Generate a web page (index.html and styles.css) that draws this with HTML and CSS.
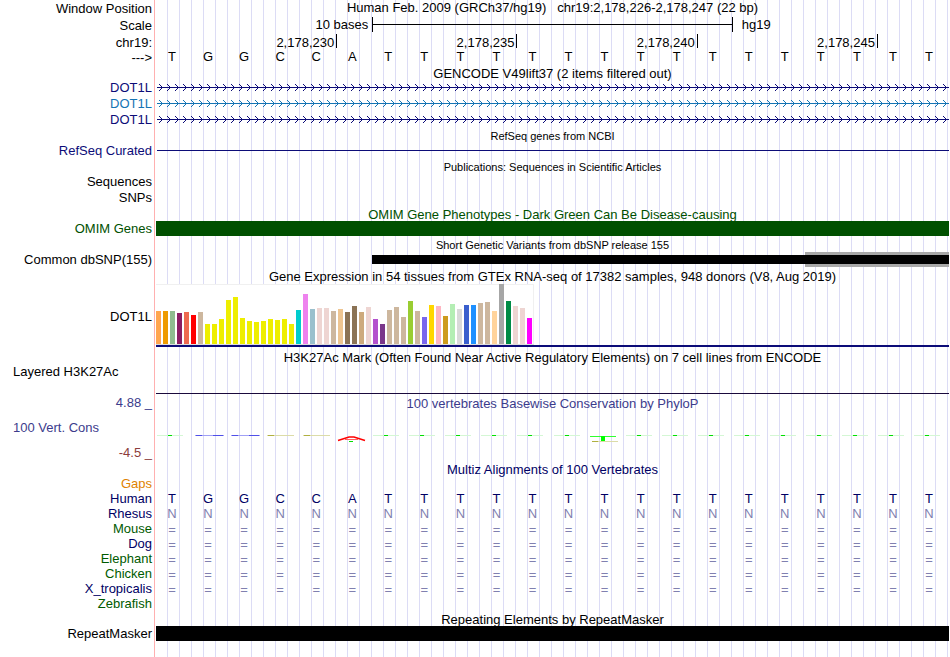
FILE: index.html
```
<!DOCTYPE html>
<html lang="en">
<head>
    <meta charset="UTF-8">
    <meta name="viewport" content="width=device-width, initial-scale=1.0">
    <title>chr19:2,178,226-2,178,247 hg19</title>
    <link rel="stylesheet" href="styles.css">
</head>
<body>
    <svg class="defs" aria-hidden="true">
        <defs>
            <pattern id="arrowsNavy" width="8" height="16" patternUnits="userSpaceOnUse">
                <path d="M2 4h1v1h-1zM3 5h1v1h-1zM4 6h1v1h-1zM5 7h1v1h-1zM4 8h1v1h-1zM3 9h1v1h-1zM2 10h1v1h-1z" fill="#0c0c78"/>
            </pattern>
            <pattern id="arrowsBlue" width="8" height="16" patternUnits="userSpaceOnUse">
                <path d="M2 4h1v1h-1zM3 5h1v1h-1zM4 6h1v1h-1zM5 7h1v1h-1zM4 8h1v1h-1zM3 9h1v1h-1zM2 10h1v1h-1z" fill="#1474b4"/>
            </pattern>
        </defs>
    </svg>

    <main class="tracks">
        <div class="row header">
            <div class="label">Window Position</div>
            <div class="title">Human Feb. 2009 (GRCh37/hg19) &nbsp; chr19:2,178,226-2,178,247 (22 bp)</div>
        </div>
        <div class="row header">
            <div class="label">Scale</div>
            <div class="data columns">
                <div class="scale-from">10 bases</div>
                <div class="scale-bar"></div>
                <div class="scale-to">hg19</div>
            </div>
        </div>
        <div class="row position">
            <div class="label">chr19:</div>
            <div class="data columns">
                <div class="tick">2,178,230</div>
                <div class="tick">2,178,235</div>
                <div class="tick">2,178,240</div>
                <div class="tick">2,178,245</div>
            </div>
        </div>
        <div class="row strand">
            <div class="label">---&gt;</div>
            <div class="data bases" data-seq="TGGCCATTTTTTTTTTTTTTTT"></div>
        </div>

        <h2 class="title">GENCODE V49lift37 (2 items filtered out)</h2>
        <div class="row navy">
            <div class="label">DOT1L</div>
            <div class="data intron"><svg><rect width="100%" height="16" fill="url(#arrowsNavy)"/></svg></div>
        </div>
        <div class="row blue">
            <div class="label">DOT1L</div>
            <div class="data intron"><svg><rect width="100%" height="16" fill="url(#arrowsBlue)"/></svg></div>
        </div>
        <div class="row navy">
            <div class="label">DOT1L</div>
            <div class="data intron"><svg><rect width="100%" height="16" fill="url(#arrowsNavy)"/></svg></div>
        </div>

        <h2 class="title small">RefSeq genes from NCBI</h2>
        <div class="row navy">
            <div class="label">RefSeq Curated</div>
            <div class="data intron"></div>
        </div>

        <h2 class="title small">Publications: Sequences in Scientific Articles</h2>
        <div class="row">
            <div class="label">Sequences</div>
        </div>
        <div class="row">
            <div class="label">SNPs</div>
        </div>

        <h2 class="title omim">OMIM Gene Phenotypes - Dark Green Can Be Disease-causing</h2>
        <div class="row omim">
            <div class="label">OMIM Genes</div>
            <div class="data"><div class="bar"></div></div>
        </div>

        <h2 class="title small">Short Genetic Variants from dbSNP release 155</h2>
        <div class="row">
            <div class="label">Common dbSNP(155)</div>
            <div class="data columns variants">
                <div class="variant"></div>
                <div class="variant uncertain"></div>
            </div>
        </div>

        <h2 class="title">Gene Expression in 54 tissues from GTEx RNA-seq of 17382 samples, 948 donors (V8, Aug 2019)</h2>
        <div class="row gtex">
            <div class="label">DOT1L</div>
            <div class="data">
                <div class="chart" id="gtexChart"></div>
                <div class="gene-line"></div>
            </div>
        </div>

        <h2 class="title">H3K27Ac Mark (Often Found Near Active Regulatory Elements) on 7 cell lines from ENCODE</h2>
        <div class="row h3k27">
            <div class="label left">Layered H3K27Ac</div>
            <div class="data"></div>
        </div>

        <div class="row phylop-top">
            <div class="label">4.88 _</div>
            <h2 class="title">100 vertebrates Basewise Conservation by PhyloP</h2>
        </div>
        <div class="row phylop">
            <div class="label-group">
                <div class="label left">100 Vert. Cons</div>
                <div class="label min">-4.5 _</div>
            </div>
            <div class="data bases" id="phylop"></div>
        </div>

        <h2 class="title multiz">Multiz Alignments of 100 Vertebrates</h2>
        <div class="row species gaps">
            <div class="label">Gaps</div>
        </div>
        <div class="row species human">
            <div class="label">Human</div>
            <div class="data bases" data-seq="TGGCCATTTTTTTTTTTTTTTT"></div>
        </div>
        <div class="row species">
            <div class="label">Rhesus</div>
            <div class="data bases" data-seq="NNNNNNNNNNNNNNNNNNNNNN"></div>
        </div>
        <div class="row species green">
            <div class="label">Mouse</div>
            <div class="data bases unaligned" data-seq="======================"></div>
        </div>
        <div class="row species">
            <div class="label">Dog</div>
            <div class="data bases unaligned" data-seq="======================"></div>
        </div>
        <div class="row species green">
            <div class="label">Elephant</div>
            <div class="data bases unaligned" data-seq="======================"></div>
        </div>
        <div class="row species green">
            <div class="label">Chicken</div>
            <div class="data bases unaligned" data-seq="======================"></div>
        </div>
        <div class="row species">
            <div class="label">X_tropicalis</div>
            <div class="data bases unaligned" data-seq="======================"></div>
        </div>
        <div class="row species green">
            <div class="label">Zebrafish</div>
        </div>

        <h2 class="title">Repeating Elements by RepeatMasker</h2>
        <div class="row">
            <div class="label">RepeatMasker</div>
            <div class="data"><div class="bar"></div></div>
        </div>
    </main>

    <script>
        // one cell per base
        document.querySelectorAll('[data-seq]').forEach(row => {
            row.innerHTML = row.dataset.seq.split('').map(b => `<span>${b}</span>`).join('');
        });

        // GTEx: [height, colour] per tissue
        const tissues = [
            [33, '#ffa54f'], [33, '#ee9a00'], [33, '#8fbc8f'], [31, '#8b1c62'], [32, '#ee6a50'],
            [29, '#ff0000'], [32, '#cdb79e'], [20, '#eeee00'], [20, '#eeee00'], [25, '#eeee00'],
            [44, '#eeee00'], [47, '#eeee00'], [26, '#eeee00'], [23, '#eeee00'], [22, '#eeee00'],
            [23, '#eeee00'], [25, '#eeee00'], [24, '#eeee00'], [25, '#eeee00'], [20, '#eeee00'],
            [34, '#00cdcd'], [50, '#ee82ee'], [35, '#9ac0cd'], [36, '#eed5d2'], [36, '#eed5d2'],
            [33, '#cdb79e'], [35, '#eec591'], [32, '#8b7355'], [38, '#8b7355'], [32, '#cdaa7d'],
            [37, '#eed5d2'], [25, '#b452cd'], [20, '#7a378b'], [34, '#cdb79e'], [37, '#cdb79e'],
            [27, '#cdb79e'], [43, '#9acd32'], [33, '#cdb79e'], [27, '#7a67ee'], [39, '#ffd700'],
            [38, '#ffb6c1'], [28, '#cd9b1d'], [40, '#b4eeb4'], [35, '#d9d9d9'], [39, '#3a5fcd'],
            [39, '#1e90ff'], [41, '#cdb79e'], [42, '#cdb79e'], [33, '#ffd39b'], [60, '#a6a6a6'],
            [43, '#008b45'], [38, '#eed5d2'], [36, '#eed5d2'], [26, '#ff00ff']
        ];
        document.getElementById('gtexChart').innerHTML = tissues
            .map(([h, c]) => `<i style="height:${h}px;background:${c}"></i>`).join('');

        // PhyloP logo letters, flattened to almost nothing where the score is near zero
        const glyphs = {
            T: '<path d="M3 .5h26" stroke="#d4f7d4"/><path d="M14 .5h4" stroke="#00e000"/>',
            G: '<path d="M5 .5h29" stroke="#a0a0f5"/><path d="M6 .5h6M23 .5h10" stroke="#5050e8"/>',
            C: '<path d="M5 .5h27" stroke="#dcdca8"/><path d="M6 .5h6" stroke="#b0b040"/>',
            A: '<path d="M4 5.5L15 2h5l11 3.5" fill="none" stroke="#ff0000" stroke-width="1.5"/><path d="M11 4.5h13" stroke="#ff6060"/><path d="M15 6.5h4" stroke="#00e000"/>',
            t: '<path d="M3 1.5h26" stroke="#30ff30"/><path d="M14 1h4v5h-4z" fill="#00ff00"/><path d="M5 6.5h26" stroke="#dcdca8"/><path d="M5 6.5h6" stroke="#b0b040"/>'
        };
        document.getElementById('phylop').innerHTML = 'TGGCCATTTTTTtTTTTTTTTT'.split('')
            .map(b => `<svg viewBox="0 0 36 8">${glyphs[b]}</svg>`).join('');
    </script>
</body>
</html>
```
FILE: styles.css
```
:root {
    --navy: #0c0c78;
    --blue: #1474b4;
    --green: #005000;
    --grid: #dcdcf5;
    --edge: #ffb0b0;
}

body {
    font-family: "Liberation Sans", Arial, Helvetica, sans-serif;
    font-size: 13px;
    line-height: 16px;
    margin: 0;
    background-color: white;
    color: black;
}

.defs {
    position: absolute;
    width: 0;
    height: 0;
}

/* pink edge of the label column, then a guide line every 12px */
.tracks {
    min-height: 100vh;
    margin-right: 1px;
    background-image:
        linear-gradient(var(--edge), var(--edge)),
        repeating-linear-gradient(to right, transparent 0 11px, var(--grid) 11px 12px);
    background-size: 1px 100%, 100% 100%;
    background-position: 154px 0, 156px 0;
    background-repeat: no-repeat;
}

.row {
    display: grid;
    grid-template-columns: 152px minmax(0, 1fr);
    column-gap: 4px;
    height: 16px;
}

.label {
    text-align: right;
    white-space: nowrap;
}

.label.left {
    text-align: left;
    padding-left: 13px;
}

.title {
    margin: 0 0 0 156px;
    height: 15px;
    font-size: 13px;
    font-weight: normal;
    line-height: 17px;
    text-align: center;
    white-space: nowrap;
}

.title.small {
    font-size: 11px;
    line-height: 16px;
}

.row .title {
    margin-left: 0;
}

/* ruler */
.header {
    height: 17px;
    line-height: 17px;
}

.header .title {
    line-height: 15px;
}

.columns {
    display: grid;
    grid-template-columns: repeat(22, 1fr);
}

.scale-from {
    grid-column: span 6;
    padding-right: 4px;
    line-height: 15px;
    text-align: right;
}

.scale-bar {
    grid-column: span 10;
    height: 15px;
    border: solid black;
    border-width: 0 1px;
    background: linear-gradient(black, black) 0 7px / 100% 1px no-repeat;
}

.scale-to {
    grid-column: span 6;
    padding-left: 9px;
    line-height: 15px;
}

.position {
    height: 15px;
    line-height: 17px;
}

.tick {
    grid-column: span 5;
    height: 14px;
    padding-right: 2px;
    border-right: 1px solid black;
    margin-right: -1px;
    text-align: right;
}

.strand .label {
    line-height: 18px;
}

.bases {
    display: grid;
    grid-template-columns: repeat(22, 1fr);
    margin: 0 2px 0 -2px;
    line-height: 15px;
    text-align: center;
}

/* genes */
.navy {
    color: var(--navy);
}

.blue {
    color: var(--blue);
}

.intron {
    margin-left: 1px;
    background: linear-gradient(currentColor, currentColor) 0 7px / 100% 1px no-repeat;
}

.intron svg {
    display: block;
    width: 100%;
    height: 16px;
}

.bar {
    height: 15px;
    background-color: black;
}

.omim {
    color: var(--green);
}

.omim .bar {
    background-color: var(--green);
}

.variants {
    height: 15px;
}

.variant {
    grid-column: 7 / 19;
    background: linear-gradient(black, black) 0 3px / 100% 9px no-repeat;
}

.variant.uncertain {
    grid-column: 19 / 23;
    background-color: #a8a8a8;
}

/* expression chart */
.gtex {
    height: 66px;
}

.gtex .label {
    line-height: 67px;
}

.chart {
    box-sizing: border-box;
    display: flex;
    align-items: flex-end;
    gap: 2px;
    width: 378px;
    height: 61px;
    margin-top: 1px;
    border-bottom: 1px solid #ddd;
    box-shadow: inset 0 1px #f0f0f0, inset -1px 0 #f0f0f0;
    background-color: white;
}

.chart i {
    width: 5px;
}

.gene-line {
    height: 2px;
    background-color: var(--navy);
}

.h3k27 {
    height: 31px;
}

.h3k27 .data {
    height: 29px;
    border-bottom: 1px solid #1a0a3c;
}

/* conservation */
.phylop-top,
.phylop {
    color: #3c3c8c;
}

.phylop-top {
    height: 15px;
}

.phylop {
    height: 51px;
}

.label-group {
    display: flex;
    flex-direction: column;
    gap: 9px;
    padding-top: 10px;
}

.min {
    color: #8c3c3c;
}

.phylop .bases {
    padding-top: 25px;
}

.phylop svg {
    width: 36px;
    height: 8px;
}

/* alignments */
.multiz {
    color: #000064;
}

.species {
    height: 15px;
    line-height: 15px;
    color: #000064;
}

.species .bases {
    color: #8080b0;
}

.species.human .bases {
    color: #000064;
}

.species.green {
    color: #005a00;
}

.species.gaps {
    color: #e08200;
}

.species .unaligned {
    line-height: 17px;
}
```
